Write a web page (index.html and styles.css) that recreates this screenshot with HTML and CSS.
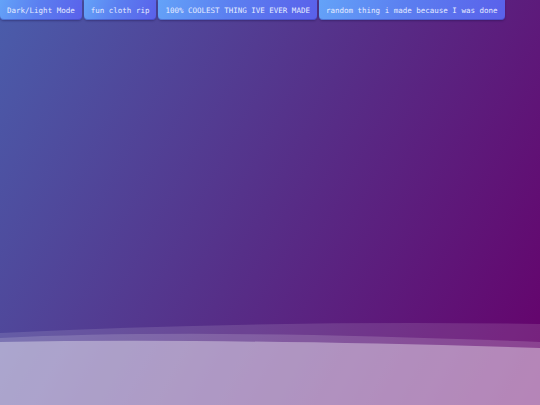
FILE: index.html
```html
<!DOCTYPE html>
<html lang="en">
<head>
<meta charset="utf-8">
<title>Playground</title>
<link rel="stylesheet" href="styles.css">
</head>
<body>
  <nav class="nav">
    <button class="nav-btn">Dark/Light Mode</button>
    <button class="nav-btn">fun cloth rip</button>
    <button class="nav-btn">100% COOLEST THING IVE EVER MADE</button>
    <button class="nav-btn">random thing i made because I was done</button>
  </nav>
  <main class="stage"></main>
  <footer class="waves">
    <svg class="waves-svg" viewBox="0 0 540 85" preserveAspectRatio="none" aria-hidden="true">
      <path class="wave wave-back" d="M0 13 Q270 0 540 4 V85 H0 Z"/>
      <path class="wave wave-mid" d="M0 18 Q200 8 540 22 V85 H0 Z"/>
      <path class="wave wave-front" d="M0 22 Q220 18 540 28 V85 H0 Z"/>
    </svg>
  </footer>
</body>
</html>
```
FILE: styles.css
```css
html, body {
  margin: 0;
  height: 100%;
}

body {
  display: flex;
  flex-direction: column;
  min-height: 100vh;
  background: linear-gradient(118deg, #4a5dab 0%, #562f88 50%, #66006a 100%);
  font-family: "DejaVu Sans Mono", monospace;
  overflow: hidden;
}

.nav {
  display: flex;
  gap: 2px;
}

.nav-btn {
  height: 20px;
  padding: 1px 7px 0;
  border: 0;
  border-radius: 0 0 4px 4px;
  background: linear-gradient(110deg, #64a3f8 0%, #5b7ff0 45%, #5a60ea 100%);
  box-shadow: inset 0 -1px 0 rgba(40, 40, 150, 0.35), 0 1px 2px rgba(20, 10, 60, 0.35);
  color: #e6ecff;
  font-family: "DejaVu Sans Mono", monospace;
  font-size: 7.5px;
  line-height: 19px;
  white-space: nowrap;
  cursor: pointer;
}

.stage {
  flex: 1;
}

.waves {
  height: 85px;
}

.waves-svg {
  display: block;
  width: 100%;
  height: 100%;
}

.wave {
  fill: #ffffff;
}

.wave-back {
  fill-opacity: 0.12;
}

.wave-mid {
  fill-opacity: 0.15;
}

.wave-front {
  fill-opacity: 0.36;
}
```
